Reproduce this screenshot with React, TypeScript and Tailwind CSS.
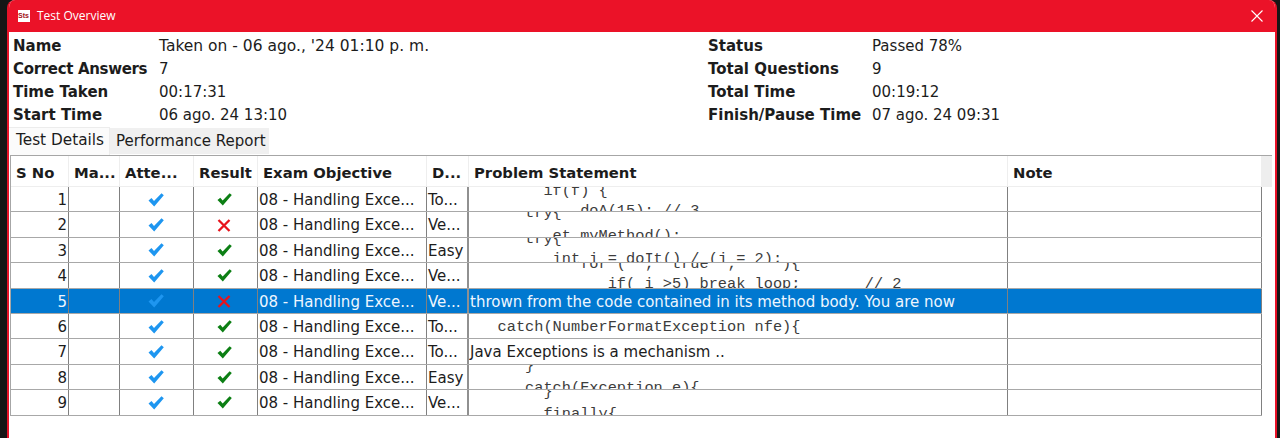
import React from 'react';

interface Row {
  no: number;
  passed: boolean;
  level: string;
  note?: string;
  code?: string[];
  codeClass?: string; // offset and line height of the clipped code
}

const rows: Row[] = [
  { no: 1, passed: true, level: 'To...', code: ['        if(f) {', '            doA(15); // 3'], codeClass: '-mt-[6px] leading-[20px]' },
  { no: 2, passed: false, level: 'Ve...', code: ['      try{', '         et myMethod();'], codeClass: '-mt-[10px] leading-[23px]' },
  { no: 3, passed: true, level: 'Easy', code: ['      try{', '         int i = doIt() / (j = 2);'], codeClass: '-mt-[9px] leading-[20px]' },
  { no: 4, passed: true, level: 'Ve...', code: ['            for (  ;  true  ;     ){', '               if( i >5) break loop;       // 2'], codeClass: '-mt-[9px] leading-[20px]' },
  { no: 5, passed: false, level: 'Ve...', note: 'thrown from the code contained in its method body. You are now' },
  { no: 6, passed: true, level: 'To...', code: ['   catch(NumberFormatException nfe){'], codeClass: 'mt-[3px] leading-[20px]' },
  { no: 7, passed: true, level: 'To...', note: 'Java Exceptions is a mechanism ..' },
  { no: 8, passed: true, level: 'Easy', code: ['      }', '      catch(Exception e){'], codeClass: '-mt-[10px] leading-[22px]' },
  { no: 9, passed: true, level: 'Ve...', code: ['        }', '        finally{'], codeClass: '-mt-[9px] leading-[22px]' },
];

const info = [
  { label: 'Name', value: "Taken on - 06 ago., '24 01:10 p. m.", label2: 'Status', value2: 'Passed 78%', valueClass: 'text-[15.5px]' },
  { label: 'Correct Answers', value: '7', label2: 'Total Questions', value2: '9', labelClass: 'tracking-[-0.33px]' },
  { label: 'Time Taken', value: '00:17:31', label2: 'Total Time', value2: '00:19:12' },
  { label: 'Start Time', value: '06 ago. 24 13:10', label2: 'Finish/Pause Time', value2: '07 ago. 24 09:31' },
];

const headers = [
  { label: 'S No', w: 'w-[58px]' },
  { label: 'Ma...', w: 'w-[51px]' },
  { label: 'Atte...', w: 'w-[74px]' },
  { label: 'Result', w: 'w-[64px]' },
  { label: 'Exam Objective', w: 'w-[169px]' },
  { label: 'D...', w: 'w-[42px]' },
  { label: 'Problem Statement', w: 'w-[539px]' },
  { label: 'Note', w: 'w-[254px]' },
];

function Check({ color, w, h }: { color: string; w: number; h: number }) {
  return (
    <svg width={w} height={h} viewBox="0 0 16 14" preserveAspectRatio="none">
      <path d="M0.5 7.5 L3.5 5 L6 8 L13.5 0.3 L15.8 2.2 L6.2 13.5 Z" fill={color} />
    </svg>
  );
}

function Cross() {
  return (
    <svg width="14" height="13" viewBox="0 0 14 13">
      <path d="M1.5 1 L12.5 12 M12.5 1 L1.5 12" stroke="#e8141c" strokeWidth="2.3" fill="none" />
    </svg>
  );
}

export default function App() {
  return (
    <div className="w-[1280px] h-[438px] bg-[#161616] pl-[7px] pr-[3px] font-['DejaVu_Sans',sans-serif] text-[15px] text-[#1c1c1c] overflow-hidden">
      <div className="h-full flex flex-col rounded-t-lg bg-white border-x-2 border-[#e81228] overflow-hidden">
        {/* Title bar */}
        <div className="h-[32px] shrink-0 -mx-[2px] bg-[#eb1228] flex items-center pl-[11px] pr-[14px] text-white">
          <div className="w-[12px] h-[12px] bg-white text-[#a01020] text-[7px] leading-[12px] font-bold font-['Liberation_Sans',sans-serif] overflow-hidden">
            Sts
          </div>
          <span className="ml-[7px] text-[12px] font-['Open_Sans',sans-serif]">Test Overview</span>
          <svg className="ml-auto" width="12" height="12" viewBox="0 0 12 12">
            <path d="M0.5 0.5 L11.5 11.5 M11.5 0.5 L0.5 11.5" stroke="#fff" strokeWidth="1.1" fill="none" />
          </svg>
        </div>

        {/* Summary */}
        <div className="pt-[3px] pl-[4px] shrink-0">
          {info.map((r) => (
            <div key={r.label} className="flex h-[23px] items-center">
              <div className={`w-[146px] font-bold whitespace-nowrap ${r.labelClass ?? ''}`}>{r.label}</div>
              <div className={`w-[549px] whitespace-nowrap ${r.valueClass ?? ''}`}>{r.value}</div>
              <div className="w-[164px] font-bold whitespace-nowrap">{r.label2}</div>
              <div className="whitespace-nowrap">{r.value2}</div>
            </div>
          ))}
        </div>

        {/* Tabs */}
        <div className="flex h-[28px] shrink-0">
          <div className="w-[101px] bg-[#fbfbfb] border-t border-r border-[#ececec] pl-[7px] pt-[1px] leading-[22px] text-[15.3px]">Test Details</div>
          <div className="w-[159px] mt-[1px] mb-[1px] bg-[#f0f0f0] pl-[6px] pt-[2px] leading-[22px]">Performance Report</div>
        </div>

        {/* Table */}
        <div className="ml-[1px] mr-[3px] border-t border-l border-[#a6a6a6] shrink-0">
          <div className="flex h-[31px]">
            {headers.map((h) => (
              <div key={h.label} className={`${h.w} shrink-0 border-r border-b border-[#eeeeee] pl-[5px] pt-[3px] font-bold text-[14.8px] leading-[28px] whitespace-nowrap`}>
                {h.label}
              </div>
            ))}
            <div className="flex-1 bg-[#eeeeee]" />
          </div>
          {rows.map((r) => {
            const selected = r.no === 5;
            const cell = 'shrink-0 h-full border-r border-[#808080] overflow-hidden';
            return (
              <div
                key={r.no}
                className={`flex h-[25.4px] w-[1251px] border-b border-[#a8a8a8] ${selected ? 'bg-[#0078d0] text-[#eef6ff]' : ''}`}
              >
                <div className={`${cell} w-[58px] text-right pr-[1px] leading-[26px]`}>{r.no}</div>
                <div className={`${cell} w-[51px]`} />
                <div className={`${cell} w-[74px] flex items-center justify-center pr-[2px] pt-[1px]`}>
                  <Check color="#1e96f0" w={16} h={14} />
                </div>
                <div className={`${cell} w-[64px] flex items-center justify-center pr-[3px] pt-[1px]`}>
                  {r.passed ? <Check color="#0c7f14" w={15} h={13} /> : <Cross />}
                </div>
                <div className={`${cell} w-[169px] pl-[1px] leading-[26px] whitespace-nowrap`}>08 - Handling Exce...</div>
                <div className={`${cell} w-[42px] pl-[1px] leading-[26px] whitespace-nowrap border-r-2 border-[#909090]`}>{r.level}</div>
                <div className={`${cell} w-[539px] pl-[1px] whitespace-pre`}>
                  {r.note && <div className="leading-[26px]">{r.note}</div>}
                  {r.code && (
                    <div className={`font-['Liberation_Mono',monospace] text-[15.3px] text-[#3c3c3c] ${r.codeClass}`}>
                      {r.code.map((line, i) => (
                        <div key={i}>{line}</div>
                      ))}
                    </div>
                  )}
                </div>
                <div className={`${cell} w-[254px]`} />
              </div>
            );
          })}
        </div>
      </div>
    </div>
  );
}
